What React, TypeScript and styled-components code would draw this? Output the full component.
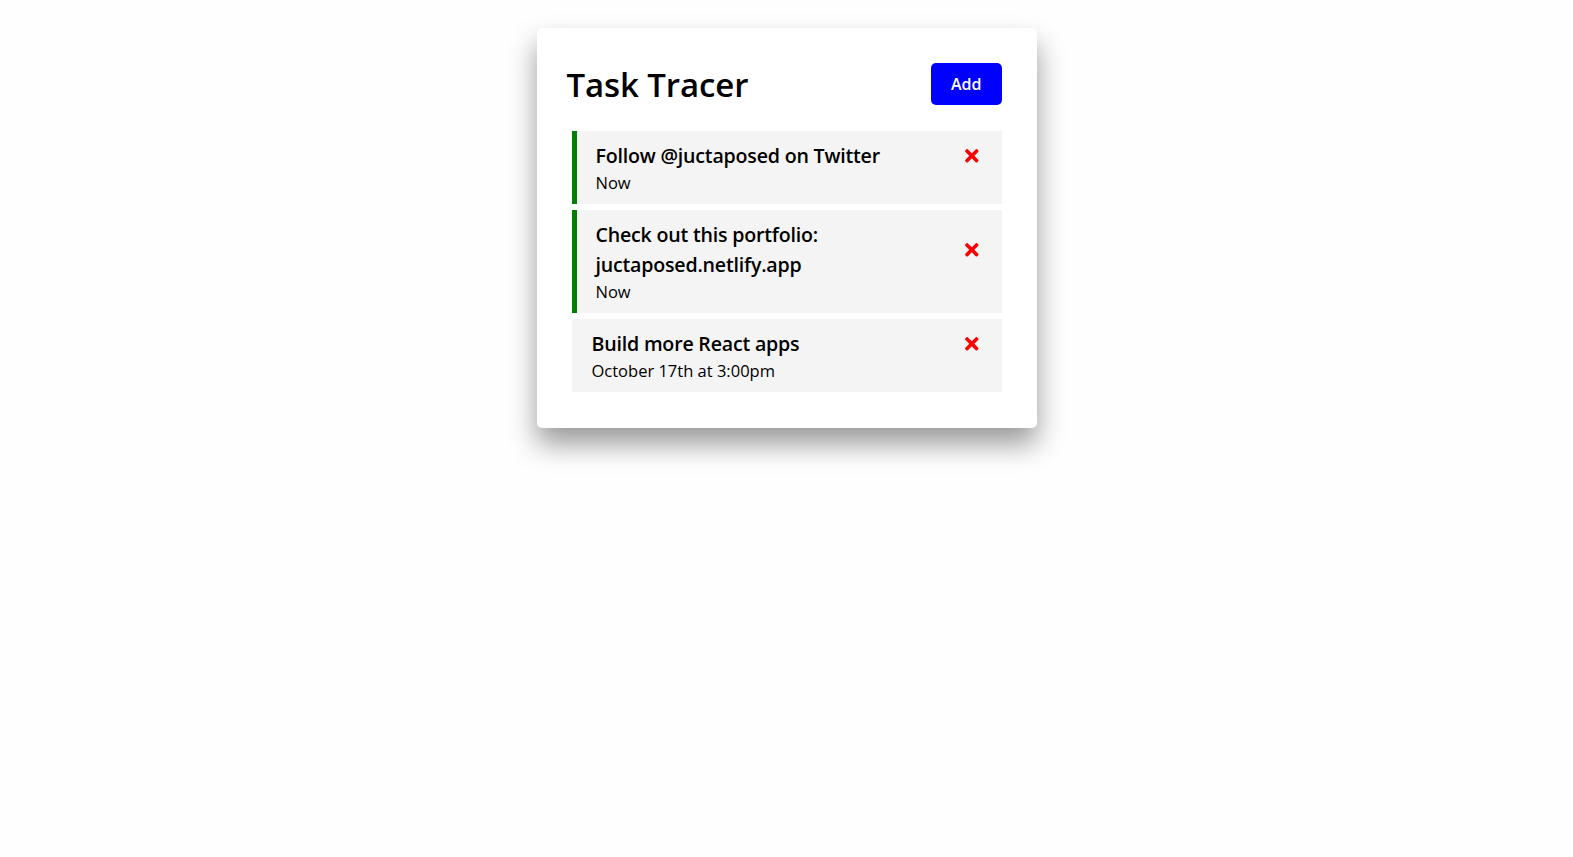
import { createGlobalStyle } from 'styled-components';
import styled from 'styled-components';
import { FaTimes } from 'react-icons/fa';

const GlobalStyle = createGlobalStyle`
  * { box-sizing: border-box; margin: 0; padding: 0; }
  body {
    background: #fefefe;
    font-family: 'Open Sans', 'Noto Sans', sans-serif;
    color: #000;
  }
`;

const Page = styled.div`
  min-height: 100vh;
  padding: 28px 0 60px;
`;

const Container = styled.div`
  width: 500px;
  margin: 0 auto;
  min-height: 300px;
  padding: 30px;
  background: #fff;
  border-radius: 5px;
  box-shadow: 0 16px 28px rgba(0, 0, 0, 0.4);
`;

const Header = styled.header`
  display: flex;
  justify-content: space-between;
  align-items: center;
  margin-bottom: 21px;
`;

const Title = styled.h1`
  font-size: 33px;
  font-weight: 600;
  letter-spacing: -0.1px;
`;

const Button = styled.button`
  background: blue;
  color: #fff;
  border: none;
  padding: 10px 20px;
  margin: 5px;
  border-radius: 5px;
  font-family: inherit;
  font-size: 16px;
  font-weight: 600;
  line-height: 22px;
  cursor: pointer;
`;

const Task = styled.div<{ $reminder?: boolean }>`
  background: #f4f4f4;
  margin: 6px 5px;
  padding: 10px 20px 10px ${(p) => (p.$reminder ? '19px' : '20px')};
  border-left: ${(p) => (p.$reminder ? '5px solid green' : 'none')};
  cursor: pointer;
`;

const TaskTitle = styled.h3`
  display: flex;
  justify-content: space-between;
  align-items: center;
  font-size: 19.6px;
  font-weight: 600;
  line-height: 30px;
  letter-spacing: -0.2px;

  svg {
    flex: none;
    color: red;
    margin-left: 20px;
  }
`;

const TaskDay = styled.p`
  font-size: 16.5px;
  line-height: 23px;
`;

const tasks = [
  { id: 1, text: 'Follow @juctaposed on Twitter', day: 'Now', reminder: true },
  { id: 2, text: 'Check out this portfolio: juctaposed.netlify.app', day: 'Now', reminder: true },
  { id: 3, text: 'Build more React apps', day: 'October 17th at 3:00pm', reminder: false },
];

export default function App() {
  return (
    <Page>
      <GlobalStyle />
      <Container>
        <Header>
          <Title>Task Tracer</Title>
          <Button>Add</Button>
        </Header>
        {tasks.map((t) => (
          <Task key={t.id} $reminder={t.reminder}>
            <TaskTitle>
              <span>{t.text}</span>
              <FaTimes />
            </TaskTitle>
            <TaskDay>{t.day}</TaskDay>
          </Task>
        ))}
      </Container>
    </Page>
  );
}
